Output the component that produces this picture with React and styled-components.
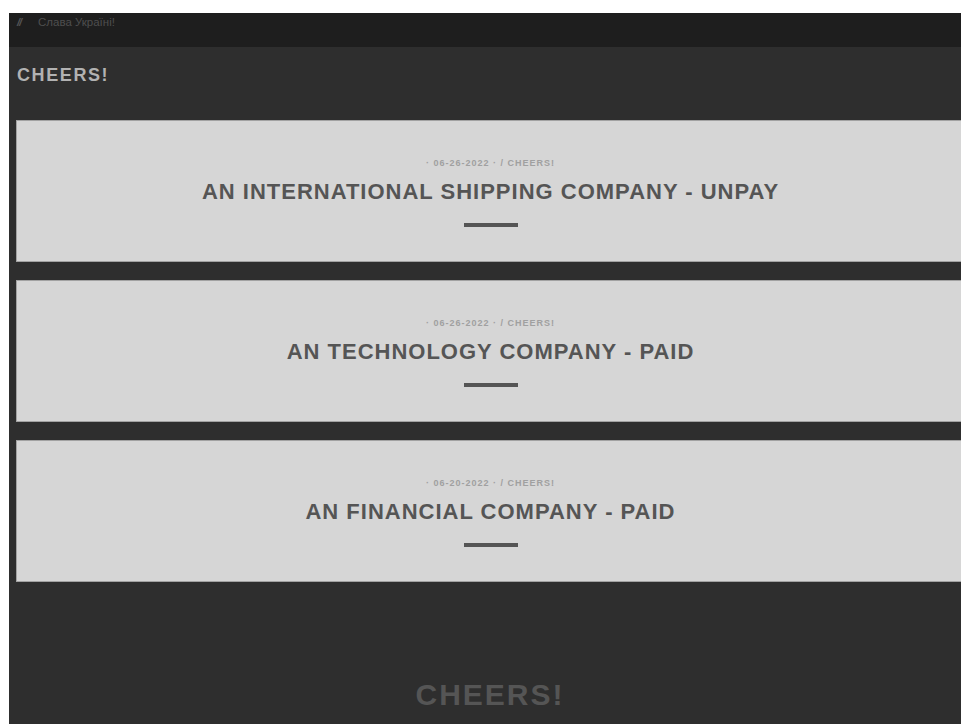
import React from "react";
import styled, { createGlobalStyle } from "styled-components";

const GlobalStyle = createGlobalStyle`
  html, body {
    background: #ffffff;
  }
  body {
    margin: 13px 0 0 9px;
    overflow: hidden;
    font-family: "Liberation Sans", Arial, sans-serif;
  }
`;

const posts = [
  { id: 1, date: "06-26-2022", category: "CHEERS!", title: "AN INTERNATIONAL SHIPPING COMPANY - UNPAY" },
  { id: 2, date: "06-26-2022", category: "CHEERS!", title: "AN TECHNOLOGY COMPANY - PAID" },
  { id: 3, date: "06-20-2022", category: "CHEERS!", title: "AN FINANCIAL COMPANY - PAID" },
];

const App = () => {
  return (
    <>
      <GlobalStyle />
      <Wrapper>
        <TopBar>
          <Slashes>//</Slashes>
          <Motto>Слава Україні!</Motto>
        </TopBar>
        <Main>
          <SiteTitle>CHEERS!</SiteTitle>
          <PostList>
            {posts.map((post) => {
              return (
                <Post key={post.id}>
                  <Meta>
                    · {post.date} · / {post.category}
                  </Meta>
                  <PostTitle>{post.title}</PostTitle>
                  <Underline />
                </Post>
              );
            })}
          </PostList>
          <Footer>CHEERS!</Footer>
        </Main>
      </Wrapper>
    </>
  );
};

const Wrapper = styled.div`
  width: 955px;
  min-height: 720px;
  background: #2e2e2e;
`;

const TopBar = styled.header`
  height: 34px;
  background: #1e1e1e;
  display: flex;
  align-items: flex-start;
  padding: 3px 0 0 8px;
  box-sizing: border-box;
  font-size: 11.5px;
  color: #4e4e4e;
`;

const Slashes = styled.span`
  font-style: italic;
  font-weight: bold;
  width: 21px;
  font-size: 11px;
  letter-spacing: -1px;
  color: #555555;
`;

const Motto = styled.span``;

const Main = styled.main`
  padding: 0 0 0 7px;
`;

const SiteTitle = styled.h1`
  margin: 0;
  padding: 18px 0 0 1px;
  height: 54px;
  font-size: 18px;
  font-weight: bold;
  letter-spacing: 1.6px;
  color: #b2b2b2;
  box-sizing: border-box;
`;

const PostList = styled.div`
  display: flex;
  flex-direction: column;
  gap: 18px;
  margin-top: 19px;
`;

const Post = styled.article`
  height: 142px;
  box-sizing: border-box;
  background: #d6d6d6;
  border: 1px solid #a2a2a2;
  border-right: none;
  display: flex;
  flex-direction: column;
  align-items: center;
  padding-top: 37px;
`;

const Meta = styled.div`
  font-size: 9px;
  font-weight: bold;
  letter-spacing: 1px;
  color: #a0a0a0;
`;

const PostTitle = styled.h2`
  margin: 11px 0 0;
  font-size: 22px;
  font-weight: bold;
  letter-spacing: 1px;
  color: #555555;
`;

const Underline = styled.div`
  width: 54px;
  height: 4px;
  margin-top: 18px;
  background: #555555;
`;

const Footer = styled.div`
  text-align: center;
  padding: 96px 0 0;
  font-size: 30px;
  font-weight: bold;
  letter-spacing: 2px;
  color: #555555;
`;

export default App;
